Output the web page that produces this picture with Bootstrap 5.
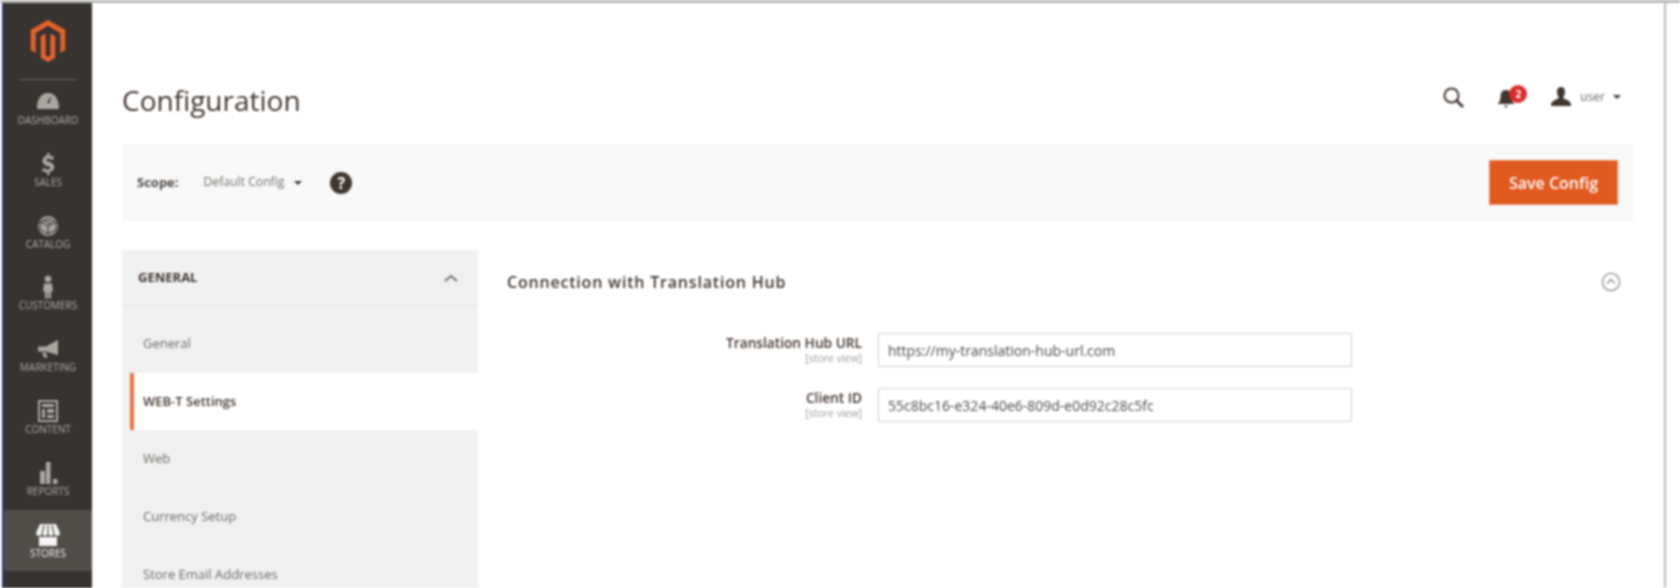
<!DOCTYPE html>
<html lang="en">
<head>
  <meta charset="UTF-8">
  <meta name="viewport" content="width=device-width, initial-scale=1.0">
  <title>Configuration</title>
  <link rel="stylesheet" href="https://cdn.jsdelivr.net/npm/bootstrap@5.3.0/dist/css/bootstrap.min.css">
  <style>
    html, body { height: 100%; overflow: hidden; background: #fff; }
    body { font-family: "Open Sans", sans-serif; color: #41362f; }

    .shell { height: 588px; width: 1680px; overflow: hidden; border-top: 3px solid #b9b9b9; padding-left: 2px; filter: blur(.8px); }

    .side-menu { width: 90px; flex: none; background: #373330; border-left: 2px solid #2f2f86; }
    .side-logo { height: 77px; margin: 0 15px; border-bottom: 1px solid #6b6762; padding-top: 17px; }
    .side-list { margin-top: -3px; }
    .side-item { height: 61.8px; padding-top: 13px; color: #aaa6a0; font-size: 10px; line-height: 12px; text-transform: uppercase; }
    .side-item svg { display: block; height: 24px; width: 28px; margin: 0 auto; fill: currentColor; }
    .side-item.is-active { background: #514e4a; color: #f5f5f5; }

    .page-area { width: 1574px; flex: none; border-right: 2px solid #b9b9b9; padding: 0 31px 0 30px; }
    .page-head { height: 141px; padding-top: 73px; }
    .page-title { font-size: 28px; font-weight: 400; line-height: 48px; margin: 0; color: #41362f; }
    .head-tools { margin-top: -7px; padding-right: 12px; }
    .user-name { font-size: 12px; color: #6f6a65; margin: 0 8px 0 8px; }
    .tri { display: inline-block; border-left: 4px solid transparent; border-right: 4px solid transparent; border-top: 4px solid #41362f; }
    .bell-wrap { width: 30px; height: 24px; margin: 0 24px 0 31px; }
    .bell-count { top: 0; left: 13px; width: 18px; height: 18px; line-height: 18px; background: #d92c2c; color: #fff; font-size: 10px; font-weight: 700; border-radius: 50%; text-align: center; }

    .scope-bar { height: 77px; background: #f8f8f8; padding: 0 15px; }
    .scope-label { font-size: 13px; font-weight: 700; color: #514a45; }
    .scope-value { font-size: 12.2px; color: #77716c; margin: 0 10px 0 25px; }
    .help-dot { width: 22px; height: 22px; line-height: 22px; border-radius: 50%; background: #41362f; color: #fff; font-size: 16px; font-weight: 700; text-align: center; margin-left: 28px; }
    .save-btn { width: 129px; height: 45px; background: #e0591f; border: 1px solid #ec8a5d; border-radius: 0; color: #fff; font-size: 16px; font-weight: 600; padding: 0; }

    .config-body { padding-top: 29px; }
    .tabs-col { width: 356px; flex: none; background: #f0f0f0; height: 400px; }
    .tabs-head { height: 58px; padding: 0 20px 0 16px; border-bottom: 3px solid #ebebeb; font-size: 13px; font-weight: 700; color: #41362f; }
    .tabs-list { padding-top: 7px; }
    .tab-link { height: 57.7px; padding-left: 21px; font-size: 13px; color: #6f6a65; }
    .tab-link.is-current { margin-left: 8px; padding-left: 9px; border-left: 4px solid #e8743b; background: #fff; color: #41362f; font-weight: 600; }

    .fields-col { padding: 18px 12px 0 29px; }
    .fields-title { font-size: 16px; font-weight: 600; letter-spacing: .8px; color: #41362f; line-height: 28px; margin: 0; }
    .fields-list { margin-top: 37px; }
    .field-row { margin-bottom: 21px; }
    .field-label { width: 371px; flex: none; text-align: right; padding: 1px 16px 0 0; }
    .field-name { font-size: 13.7px; font-weight: 600; line-height: 18px; color: #41362f; }
    .field-scope { font-size: 10.5px; line-height: 13px; color: #9a9a9a; }
    .field-input { width: 474px; height: 34px; border: 1px solid #cfcfcf; border-radius: 1px; font-size: 14px; color: #4a4a4a; padding: 0 9px; box-shadow: none; }
  </style>
</head>
<body>
  <div class="shell d-flex">
    <nav class="side-menu">
      <div class="side-logo text-center">
        <svg width="36" height="42" viewBox="0 0 24 29.3" fill="#e8622a"><path d="M12 0 0 7v14l3.4 2V9L12 4l8.600 5v14l3.400-2V7z"/><path d="M13.700 24.700 12 25.700l-1.700-1V9.500L7 11.400v15L12 29.300l5-2.900v-15l-3.300-1.900z"/></svg>
      </div>
      <div class="side-list text-center">
        <div class="side-item">
          <svg viewBox="0 0 28 24"><path d="M14 3C7 3 3 9 3 19h22c0-10-4-16-11-16zm1.300 10.500-2.200-.8 3.700-6 .5.200z"/></svg>Dashboard
        </div>
        <div class="side-item">
          <svg viewBox="0 0 28 24"><path d="M13 1h2.500v2.600c2 .2 3.500.8 4.500 1.500l-1.200 3c-1.300-.8-3-1.400-4.500-1.400-1.400 0-2 .5-2 1.200 0 2.200 8 1.500 8 7 0 2.600-1.800 4.500-4.800 5V23H13v-2.500c-2.100-.2-4-.9-5-1.700l1.200-3c1.300 1 3.200 1.700 5 1.700 1.500 0 2.300-.6 2.300-1.400 0-2.400-8-1.600-8-7C8.500 6 10.200 4 13 3.600z"/></svg>Sales
        </div>
        <div class="side-item">
          <svg viewBox="0 0 28 24"><circle cx="14" cy="12" r="10"/><path d="m6 8 8-3.500L22 8v8l-8 4-8-4zm0 0 8 4 8-4m-8 4v8M10 6.300l8 4" fill="none" stroke="#373330" stroke-width="1.100"/></svg>Catalog
        </div>
        <div class="side-item">
          <svg viewBox="0 0 28 24"><circle cx="14" cy="4" r="3.300"/><path d="M10 8.500h8l1 8h-2v7h-2.500v-6h-1v6H11v-7H9z"/></svg>Customers
        </div>
        <div class="side-item">
          <svg viewBox="0 0 28 24"><path d="M24 3v15L12 14.500H4v-5h8zM8 15.500h4l1.500 5.500-3.500-.5z"/></svg>Marketing
        </div>
        <div class="side-item">
          <svg viewBox="0 0 28 24"><path d="M4 1h20v22H4zm2 2v18h16V3zm2 2h12v3H8zm0 5h3v9H8zm5 0h7v4h-7zm0 6h7v3h-7z"/></svg>Content
        </div>
        <div class="side-item">
          <svg viewBox="0 0 28 24"><path d="M6 10h5v13H6zM12 1h4.500v22H12zM19 18h4.500v5H19z"/></svg>Reports
        </div>
        <div class="side-item is-active">
          <svg viewBox="0 0 28 24"><path d="M6 1h16l4 9c0 2-2 3-3 3s-2-1-3-2c-1 1-2 2-3 2s-2-1-3-2c-1 1-2 2-3 2s-2-1-3-2c-1 1-2 2-3 2s-3-1-3-3z"/><path d="M5 14h18v9H5z"/><path d="M10 2 8 11m6-9v9m4-9 2 9" fill="none" stroke="#514e4a" stroke-width="1.200"/></svg>Stores
        </div>
      </div>
    </nav>

    <main class="page-area">
      <header class="page-head d-flex justify-content-between align-items-start">
        <h1 class="page-title">Configuration</h1>
        <div class="head-tools d-flex align-items-center pt-3">
          <svg width="24" height="24" viewBox="0 0 24 24" fill="none" stroke="#41362f" stroke-width="2"><circle cx="10.500" cy="10.500" r="7"/><path d="m15.500 15.500 6.500 6.500" stroke-width="2.600"/></svg>
          <div class="bell-wrap position-relative">
            <svg width="20" height="24" viewBox="0 0 20 24" fill="#41362f"><path d="M10 3c4 0 5.500 3 5.500 7 0 3 1 5 3 7H1.500c2-2 3-4 3-7 0-4 1.500-7 5.500-7zM8 18.500h4L10 21z"/></svg>
            <span class="bell-count position-absolute">2</span>
          </div>
          <svg width="22" height="20" viewBox="0 0 22 20" fill="#41362f"><path d="M11 0c3 0 4 2.500 4 5s-1.500 5-2 6c2 1.500 7 2 8 6v2H1v-2c1-4 6-4.500 8-6-.5-1-2-3.500-2-6s1-5 4-5z"/></svg>
          <span class="user-name">user</span>
          <span class="tri"></span>
        </div>
      </header>

      <section class="scope-bar d-flex align-items-center">
        <span class="scope-label">Scope:</span>
        <span class="scope-value">Default Config</span>
        <span class="tri"></span>
        <span class="help-dot">?</span>
        <button type="button" class="btn save-btn ms-auto">Save Config</button>
      </section>

      <div class="config-body d-flex">
        <aside class="tabs-col">
          <div class="tabs-head d-flex align-items-center justify-content-between">
            <span>GENERAL</span>
            <svg width="14" height="8" viewBox="0 0 14 8" fill="none" stroke="#6f6a65" stroke-width="1.800"><path d="m1 7 6-5 6 5"/></svg>
          </div>
          <div class="tabs-list">
            <div class="tab-link d-flex align-items-center">General</div>
            <div class="tab-link is-current d-flex align-items-center">WEB-T Settings</div>
            <div class="tab-link d-flex align-items-center">Web</div>
            <div class="tab-link d-flex align-items-center">Currency Setup</div>
            <div class="tab-link d-flex align-items-center">Store Email Addresses</div>
          </div>
        </aside>

        <section class="fields-col flex-grow-1">
          <div class="d-flex justify-content-between align-items-center">
            <h2 class="fields-title">Connection with Translation Hub</h2>
            <svg width="20" height="20" viewBox="0 0 20 20" fill="none" stroke="#8a8a8a" stroke-width="1.300"><circle cx="10" cy="10" r="8.600"/><path d="m6 11.500 4-4 4 4"/></svg>
          </div>
          <div class="fields-list">
            <div class="field-row d-flex">
              <div class="field-label">
                <div class="field-name">Translation Hub URL</div>
                <div class="field-scope">[store view]</div>
              </div>
              <input class="form-control field-input" type="text" value="https://my-translation-hub-url.com">
            </div>
            <div class="field-row d-flex">
              <div class="field-label">
                <div class="field-name">Client ID</div>
                <div class="field-scope">[store view]</div>
              </div>
              <input class="form-control field-input" type="text" value="55c8bc16-e324-40e6-809d-e0d92c28c5fc">
            </div>
          </div>
        </section>
      </div>
    </main>
  </div>
  <script src="https://cdn.jsdelivr.net/npm/bootstrap@5.3.0/dist/js/bootstrap.bundle.min.js"></script>
</body>
</html>
